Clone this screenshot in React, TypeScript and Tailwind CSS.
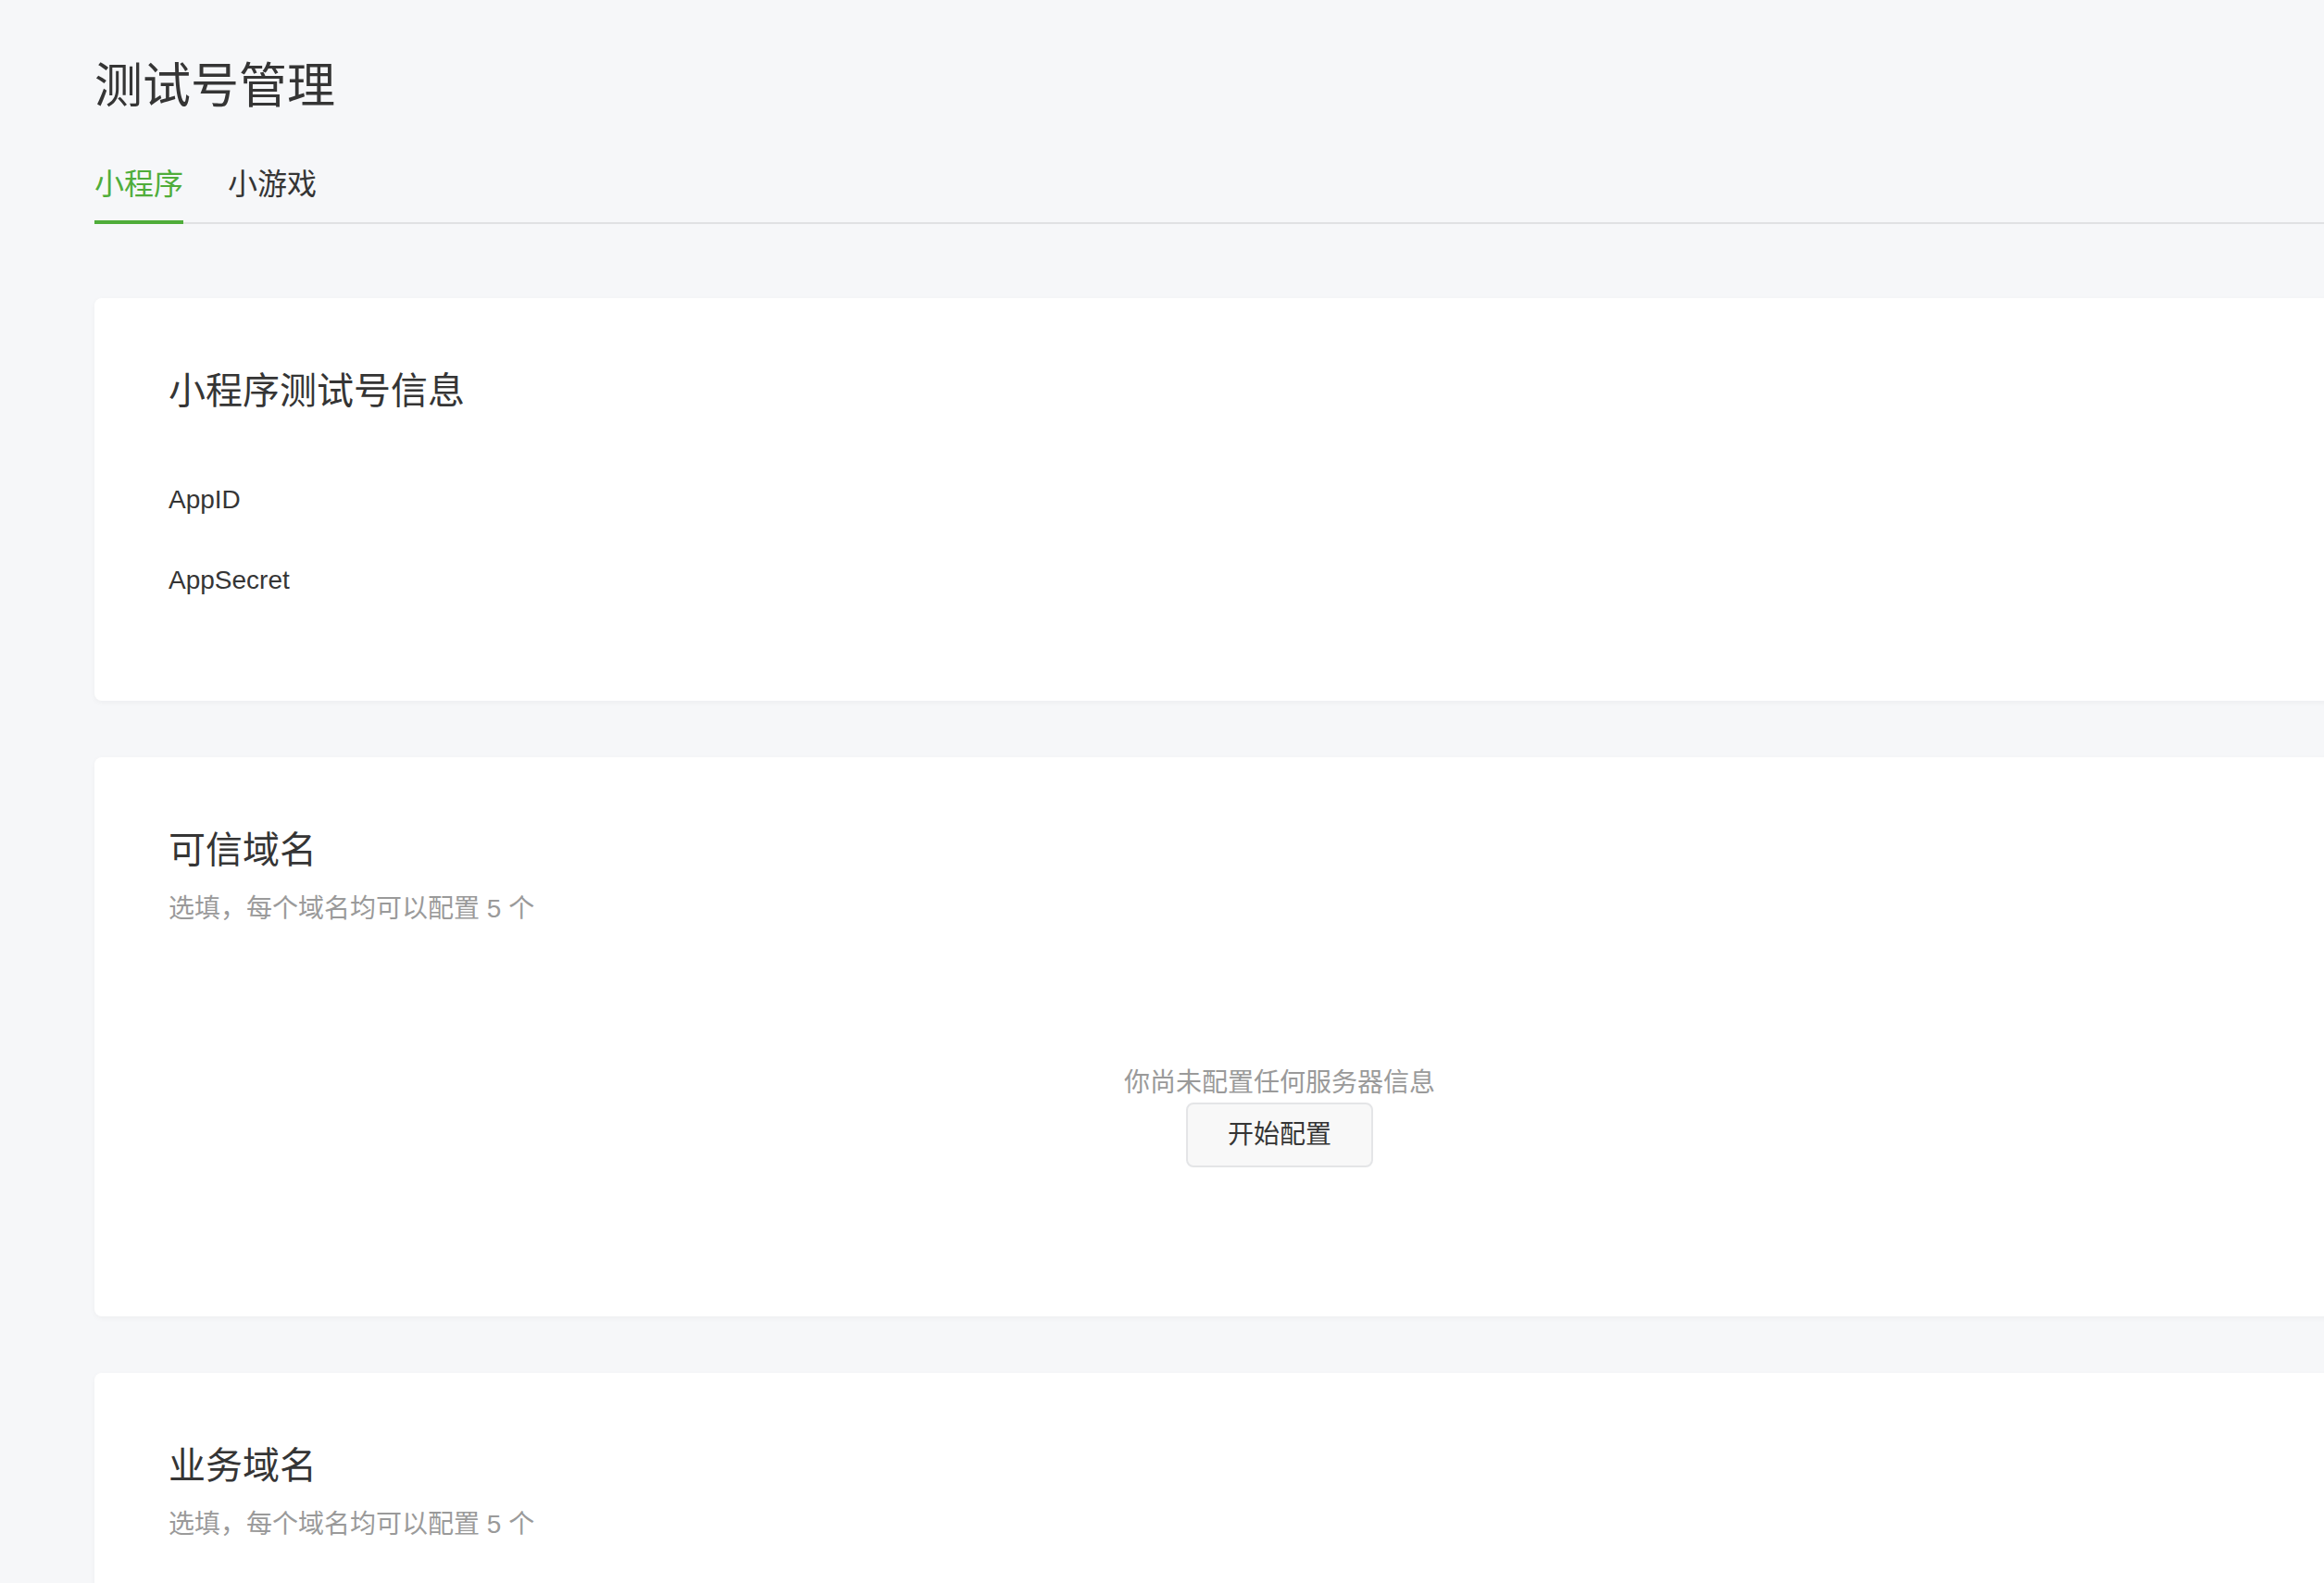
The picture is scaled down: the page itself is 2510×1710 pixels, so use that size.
const tabs = ['小程序', '小游戏'];

function DomainCard({ title }: { title: string }) {
  return (
    <div className="mt-[61px] w-[2560px] rounded-[8px] bg-white px-[80px] pt-[80px] pb-[161px] shadow-[0_2px_6px_rgba(0,0,0,0.04)]">
      <h2 className="text-[40px] leading-[40px] text-[#353535]">{title}</h2>
      <p className="mt-[30px] text-[28px] leading-[28px] text-[#9a9a9a]">选填，每个域名均可以配置 5 个</p>
      <div className="mt-[160px] flex flex-col items-center">
        <p className="text-[28px] leading-[28px] text-[#9a9a9a]">你尚未配置任何服务器信息</p>
        <button className="mt-[7px] h-[70px] w-[202px] rounded-[8px] border-2 border-[#e4e5e7] bg-[#f8f8f8] text-[28px] leading-[28px] text-[#353535]">
          开始配置
        </button>
      </div>
    </div>
  );
}

export default function App() {
  return (
    <div className="h-screen w-full overflow-hidden bg-[#f6f7f9] pl-[102px] font-['Liberation_Sans','Noto_Sans_CJK_SC',sans-serif]">
      <div className="w-[2560px]">
        <h1 className="pt-[67px] text-[52px] leading-[52px] text-[#353535]">测试号管理</h1>

        {/* tabs */}
        <div className="mt-[64px] flex border-b-2 border-[#e0e1e3]">
          {tabs.map((t, i) => (
            <div
              key={t}
              className={
                i === 0
                  ? '-mb-[2px] border-b-4 border-[#4fad3a] pb-[23px] text-[32px] leading-[32px] text-[#4fad3a]'
                  : '-mb-[2px] ml-[48px] border-b-4 border-transparent pb-[23px] text-[32px] leading-[32px] text-[#353535]'
              }
            >
              {t}
            </div>
          ))}
        </div>

        {/* 测试号信息 */}
        <div className="mt-[80px] w-[2560px] rounded-[8px] bg-white px-[80px] pt-[80px] pb-[116px] shadow-[0_2px_6px_rgba(0,0,0,0.04)]">
          <h2 className="text-[40px] leading-[40px] text-[#353535]">小程序测试号信息</h2>
          <div className="mt-[84px] text-[28px] leading-[28px] text-[#353535]">AppID</div>
          <div className="mt-[59px] text-[28px] leading-[28px] text-[#353535]">AppSecret</div>
        </div>

        <DomainCard title="可信域名" />
        <DomainCard title="业务域名" />
      </div>
    </div>
  );
}
